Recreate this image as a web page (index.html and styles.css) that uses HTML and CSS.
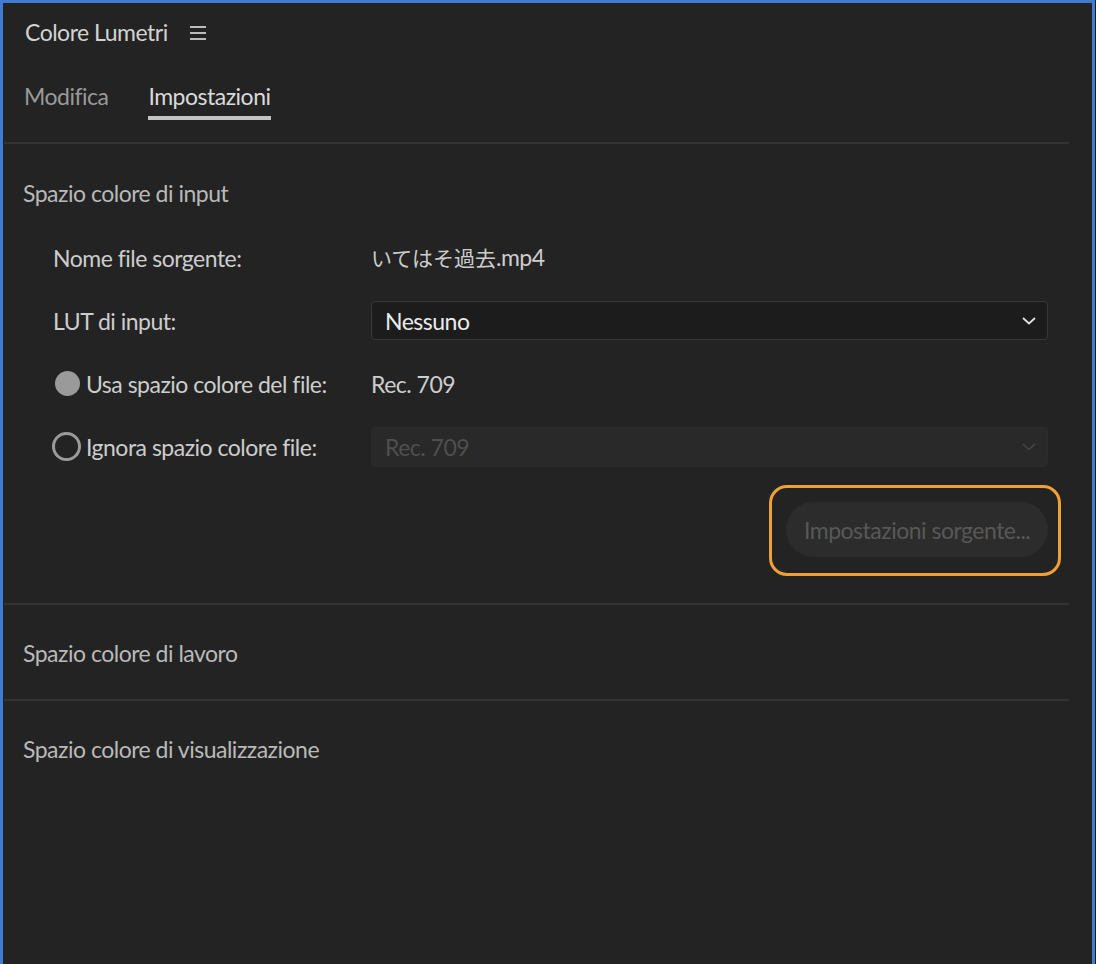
FILE: index.html
```html
<!DOCTYPE html>
<html lang="it">
<head>
<meta charset="utf-8">
<title>Colore Lumetri</title>
<link rel="stylesheet" href="styles.css">
</head>
<body>
<div class="panel">
  <div class="header">
    <span class="title">Colore Lumetri</span>
    <svg class="menu" width="16" height="16" viewBox="0 0 16 16"><rect x="0" y="1" width="16" height="2" fill="#bdbdbd"/><rect x="0" y="7" width="16" height="2" fill="#bdbdbd"/><rect x="0" y="13" width="16" height="2" fill="#bdbdbd"/></svg>
  </div>
  <div class="tabs">
    <div class="tab">Modifica</div>
    <div class="tab active">Impostazioni</div>
  </div>
  <div class="sep"></div>

  <div class="section">
    <div class="heading">Spazio colore di input</div>
    <div class="rows">
      <div class="row">
        <div class="label">Nome file sorgente:</div>
        <div class="value"><span class="cjk">いてはそ過去</span>.mp4</div>
      </div>
      <div class="row">
        <div class="label">LUT di input:</div>
        <div class="select">
          <span>Nessuno</span>
          <svg width="14" height="8" viewBox="0 0 14 8"><path d="M1 1 L7 6.5 L13 1" fill="none" stroke="#e0e0e0" stroke-width="1.8"/></svg>
        </div>
      </div>
      <div class="row">
        <div class="label radio-label"><span class="radio on"></span>Usa spazio colore del file:</div>
        <div class="value">Rec. 709</div>
      </div>
      <div class="row">
        <div class="label radio-label"><span class="radio off"></span>Ignora spazio colore file:</div>
        <div class="select disabled">
          <span>Rec. 709</span>
          <svg width="14" height="8" viewBox="0 0 14 8"><path d="M1 1 L7 6.5 L13 1" fill="none" stroke="#474747" stroke-width="1.6"/></svg>
        </div>
      </div>
    </div>
    <div class="btn-row">
      <div class="btn-wrap">
        <div class="btn">Impostazioni sorgente...</div>
        <div class="highlight"></div>
      </div>
    </div>
  </div>
  <div class="sep sep2"></div>
  <div class="heading h2">Spazio colore di lavoro</div>
  <div class="sep sep3"></div>
  <div class="heading h2">Spazio colore di visualizzazione</div>
</div>
</body>
</html>
```

FILE: styles.css
```css
html, body {
  margin: 0;
  padding: 0;
  background: #1b1b1b;
}
body {
  font-family: Lato, "Noto Sans CJK JP", sans-serif;
  font-size: 23px;
  letter-spacing: -0.5px;
  color: #cfcfcf;
}
.panel {
  box-sizing: border-box;
  width: 1095px;
  height: 964px;
  background: #232323;
  border-top: 3px solid #3f7bd3;
  border-left: 3px solid #3f7bd3;
  border-right: 3px solid #3f7bd3;
  overflow: hidden;
}
.header {
  height: 58px;
  display: flex;
  align-items: center;
  padding-left: 22px;
}
.title {
  color: #d2d2d2;
  line-height: 28px;
}
.menu {
  margin-left: 22px;
  margin-top: 1px;
}
.tabs {
  display: flex;
  padding-top: 21px;
  padding-left: 21px;
  height: 60px;
  gap: 40px;
}
.tab {
  line-height: 28px;
  padding-bottom: 6px;
  border-bottom: 4px solid transparent;
  color: #9a9a9a;
  height: 28px;
}
.tab.active {
  color: #dadada;
  border-bottom-color: #c4c4c4;
}
.sep {
  height: 2px;
  background: #333333;
  margin-left: 1px;
  margin-right: 23px;
}
.heading {
  margin-top: 35px;
  line-height: 28px;
  height: 28px;
  padding-left: 20px;
  color: #b9b9b9;
}
.rows {
  margin-top: 19px;
  padding-left: 50px;
  padding-right: 44px;
}
.row {
  height: 63px;
  display: flex;
  align-items: center;
}
.label {
  width: 318px;
  flex: none;
  color: #cdcdcd;
  line-height: 26px;
}
.radio-label {
  display: flex;
  align-items: center;
  gap: 5px;
}
.radio {
  display: block;
  box-sizing: border-box;
  border-radius: 50%;
  flex: none;
}
.radio.on {
  width: 25px;
  height: 25px;
  background: #9a9a9a;
  margin-left: 2px;
  margin-right: 1px;
}
.radio.off {
  width: 29px;
  height: 29px;
  border: 3px solid #9a9a9a;
  margin-left: -1px;
  margin-right: 0;
}
.value {
  color: #cdcdcd;
  line-height: 26px;
}
.cjk {
  font-size: 21px;
  letter-spacing: 0;
}
.select {
  flex: 1;
  height: 39px;
  box-sizing: border-box;
  background: #1c1c1c;
  border: 1px solid #383838;
  border-radius: 4px;
  display: flex;
  align-items: center;
  justify-content: space-between;
  padding: 0 11px 0 13px;
  color: #ebebeb;
}
.select.disabled {
  height: 40px;
  background: #292929;
  border-color: #2b2b2b;
  color: #4f4f4f;
}
.btn-row {
  margin-top: 24px;
  display: flex;
  justify-content: flex-end;
  padding-right: 44px;
}
.btn-wrap {
  position: relative;
}
.btn {
  width: 262px;
  height: 55px;
  box-sizing: border-box;
  border-radius: 28px;
  background: #2c2c2c;
  color: #585858;
  display: flex;
  align-items: center;
  padding-left: 18px;
  white-space: nowrap;
}
.highlight {
  position: absolute;
  left: -17px;
  top: -17px;
  width: 292px;
  height: 91px;
  box-sizing: border-box;
  border: 3px solid #f0a035;
  border-radius: 18px;
}
.sep2 {
  margin-top: 46px;
}
.h2 {
  margin-top: 34px;
}
.sep3 {
  margin-top: 32px;
}
```
